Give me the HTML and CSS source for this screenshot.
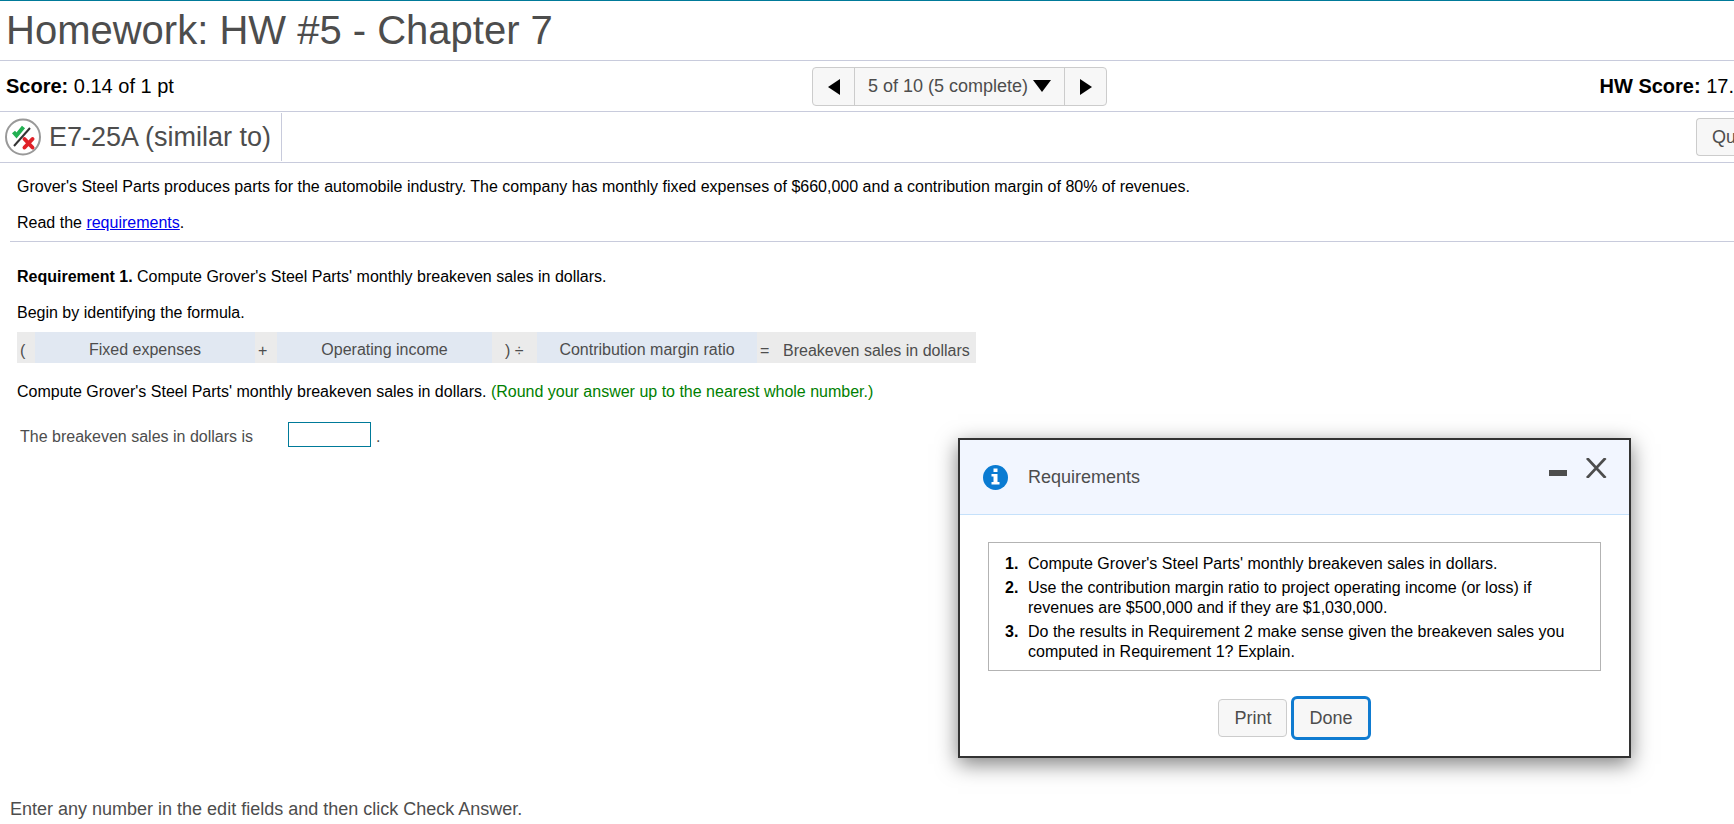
FILE: index.html
```html
<!DOCTYPE html>
<html lang="en">
<head>
    <meta charset="UTF-8">
    <meta name="viewport" content="width=device-width, initial-scale=1.0">
    <title>Homework: HW #5 - Chapter 7</title>
    <link rel="stylesheet" href="styles.css">
</head>
<body>
    <header>
        <h1>Homework: HW #5 - Chapter 7</h1>

        <div class="score-bar">
            <div><strong>Score:</strong> 0.14 of 1 pt</div>
            <nav class="pager">
                <button class="pager-btn" aria-label="Previous question">
                    <svg width="12" height="16" viewBox="0 0 12 16"><path d="M12 0v16L0 8z"/></svg>
                </button>
                <button class="pager-btn pager-menu">
                    5 of 10 (5 complete)
                    <svg width="18" height="12" viewBox="0 0 18 12"><path d="M0 0h18L9 12z"/></svg>
                </button>
                <button class="pager-btn" aria-label="Next question">
                    <svg width="12" height="16" viewBox="0 0 12 16"><path d="M0 0v16l12-8z"/></svg>
                </button>
            </nav>
            <div class="hw-score"><strong>HW Score:</strong> 17.</div>
        </div>

        <div class="question-bar">
            <h2>
                <svg width="36" height="38" viewBox="0 0 36 38">
                    <ellipse cx="18" cy="19" rx="17" ry="17.5" fill="#fff" stroke="#999" stroke-width="2"/>
                    <path d="M8.500 14l3 3.500L18.500 9" fill="none" stroke="#22b052" stroke-width="4"/>
                    <path d="M9 28L25 10" stroke="#333" stroke-width="2"/>
                    <path d="M19.500 21l8 8.500M27.500 21l-8 8.500" stroke="#e02128" stroke-width="4" stroke-linecap="round"/>
                </svg>
                E7-25A (similar to)
            </h2>
            <button class="btn help-btn">Qu</button>
        </div>
    </header>

    <section class="problem">
        <p>Grover's Steel Parts produces parts for the automobile industry. The company has monthly fixed expenses of $660,000 and a contribution margin of 80% of revenues.</p>
        <p>Read the <a href="#requirements">requirements</a>.</p>
    </section>

    <main class="work">
        <p><strong>Requirement 1.</strong> Compute Grover's Steel Parts' monthly breakeven sales in dollars.</p>
        <p>Begin by identifying the formula.</p>

        <table class="formula">
            <tr>
                <td class="op">(</td>
                <td class="term">Fixed expenses</td>
                <td class="op plus">+</td>
                <td class="term term-narrow">Operating income</td>
                <td class="op divide">) ÷</td>
                <td class="term">Contribution margin ratio</td>
                <td class="op equals">=</td>
                <td class="result">Breakeven sales in dollars</td>
            </tr>
        </table>

        <p>Compute Grover's Steel Parts' monthly breakeven sales in dollars. <span class="hint">(Round your answer up to the nearest whole number.)</span></p>

        <div class="answer">
            <label for="breakeven">The breakeven sales in dollars is</label>
            <input type="text" id="breakeven">
            <span>.</span>
        </div>
    </main>

    <footer>Enter any number in the edit fields and then click Check Answer.</footer>

    <div class="dialog" id="requirements" role="dialog" aria-labelledby="dialog-title">
        <div class="dialog-header">
            <svg class="info-icon" width="25" height="25" viewBox="0 0 25 25">
                <circle cx="12.500" cy="12.500" r="12.500" fill="#0a7bd2"/>
                <path d="M10.500 3.500h4v3.500h-4zM8.500 9h6v8h2v2.500h-8V17h2v-5.500h-2z" fill="#fff"/>
            </svg>
            <h3 id="dialog-title">Requirements</h3>
            <div class="window-controls">
                <button aria-label="Minimize">
                    <svg width="18" height="20" viewBox="0 0 18 20"><path d="M0 12h18v6H0z" fill="#4d4d4d"/></svg>
                </button>
                <button aria-label="Close">
                    <svg width="22" height="20" viewBox="0 0 22 20"><path d="M2 0L20.500 20M20.500 0L2 20" stroke="#4d4d4d" stroke-width="2.700"/></svg>
                </button>
            </div>
        </div>
        <div class="dialog-body">
            <ol>
                <li>Compute Grover's Steel Parts' monthly breakeven sales in dollars.</li>
                <li>Use the contribution margin ratio to project operating income (or loss) if revenues are $500,000 and if they are $1,030,000.</li>
                <li>Do the results in Requirement 2 make sense given the breakeven sales you computed in Requirement 1? Explain.</li>
            </ol>
        </div>
        <div class="dialog-footer">
            <button class="btn">Print</button>
            <button class="btn btn-focus">Done</button>
        </div>
    </div>
</body>
</html>
```

FILE: styles.css
```css
* {
    margin: 0;
    padding: 0;
    box-sizing: border-box;
}

body {
    position: relative;
    display: flex;
    flex-direction: column;
    min-height: 100vh;
    overflow: hidden;
    background: #fff;
    color: #000;
    font-family: "Liberation Sans", Arial, sans-serif;
    font-size: 16px;
    line-height: 20px;
}

button,
input {
    font-family: inherit;
    color: #4d4d4d;
}

header {
    border-top: 1px solid #007a99;
}

h1 {
    height: 60px;
    padding: 6px;
    border-bottom: 1px solid #c8cbdc;
    color: #4d4d4d;
    font-size: 40px;
    font-weight: 400;
    line-height: 46px;
}

/* Score row with the question pager */
.score-bar {
    display: grid;
    grid-template-columns: 9fr auto 7fr;
    align-items: center;
    height: 51px;
    padding-left: 6px;
    border-bottom: 1px solid #c8cbdc;
    font-size: 20px;
}

.hw-score {
    text-align: right;
}

.pager {
    display: flex;
    height: 39px;
    border: 1px solid #ccc;
    border-radius: 4px;
    background: #f7f7f7;
}

.pager-btn {
    display: flex;
    align-items: center;
    justify-content: center;
    gap: 5px;
    width: 41px;
    padding-top: 2px;
    border: none;
    background: none;
    font-size: 18px;
}

.pager-menu {
    width: 211px;
    padding-top: 0;
    border-right: 1px solid #ccc;
    border-left: 1px solid #ccc;
}

.question-bar {
    display: flex;
    align-items: center;
    justify-content: space-between;
    height: 51px;
    padding-left: 5px;
    border-bottom: 1px solid #c8cbdc;
}

h2 {
    display: flex;
    align-items: center;
    gap: 8px;
    height: 48px;
    padding-right: 10px;
    border-right: 1px solid #c8cbdc;
    color: #4d4d4d;
    font-size: 27px;
    font-weight: 400;
}

.btn {
    height: 38px;
    padding: 0 15px;
    border: 1px solid #ccc;
    border-radius: 4px;
    background: #f7f7f7;
    font-size: 18px;
}

/* Runs off the right edge of the window */
.help-btn {
    margin-right: -2px;
    padding-right: 0;
    border-right: none;
    border-radius: 4px 0 0 4px;
}

.problem {
    margin-left: 10px;
    padding: 14px 7px 8px;
    border-bottom: 1px solid #c8cbdc;
}

.problem p + p {
    margin-top: 16px;
}

a {
    color: #0000ee;
}

.work {
    flex: 1;
    padding: 25px 17px;
}

.work p + p {
    margin-top: 16px;
}

.formula {
    height: 31px;
    margin: 9px 0 19px;
    border-collapse: collapse;
    background: #ebebeb;
    color: #4d4d4d;
}

.formula td {
    padding-top: 7px;
}

.formula .term {
    width: 220px;
    padding-top: 4px;
    background: #e1e8f2;
    text-align: center;
}

.formula .term-narrow {
    width: 215px;
}

.op {
    width: 18px;
    padding-left: 3px;
}

.plus {
    width: 22px;
}

.divide {
    width: 45px;
    padding-left: 13px;
}

.equals {
    width: 26px;
}

.result {
    padding-right: 6px;
}

.hint {
    color: #008000;
}

.answer {
    display: flex;
    align-items: flex-end;
    margin-top: 20px;
    padding-left: 3px;
    color: #4d4d4d;
}

.answer input {
    width: 83px;
    height: 25px;
    margin: 0 5px 0 35px;
    padding: 0 4px;
    border: 1px solid #007a99;
    font-size: 16px;
}

footer {
    padding: 0 10px 5px;
    color: #4d4d4d;
    font-size: 18px;
}

.dialog {
    position: absolute;
    top: 438px;
    right: 103px;
    width: 673px;
    border: 2px solid #333;
    background: #fff;
    box-shadow: 0 6px 20px rgba(0, 0, 0, 0.5);
}

.dialog-header {
    display: flex;
    align-items: center;
    height: 75px;
    padding: 0 22px 0 23px;
    border-bottom: 1px solid #c5e1fb;
    background: #f2f6ff;
}

h3 {
    margin-left: 20px;
    color: #4d4d4d;
    font-size: 18px;
    font-weight: 400;
}

.window-controls {
    display: flex;
    align-self: flex-start;
    gap: 18px;
    margin: 18px 0 0 auto;
}

.window-controls button {
    border: none;
    background: none;
}

.dialog-body {
    margin: 27px 28px 25px;
    padding: 11px 12px 8px 16px;
    border: 1px solid #b3b3b3;
}

ol {
    list-style: none;
    counter-reset: requirement;
}

li {
    display: flex;
    counter-increment: requirement;
}

li + li {
    margin-top: 4px;
}

li::before {
    flex: 0 0 23px;
    content: counter(requirement) ".";
    font-weight: 700;
}

.dialog-footer {
    display: flex;
    align-items: center;
    justify-content: center;
    gap: 4px;
    margin-bottom: 16px;
}

.btn-focus {
    height: 44px;
    border: 3px solid #0f7bd0;
    border-radius: 6px;
}
```
